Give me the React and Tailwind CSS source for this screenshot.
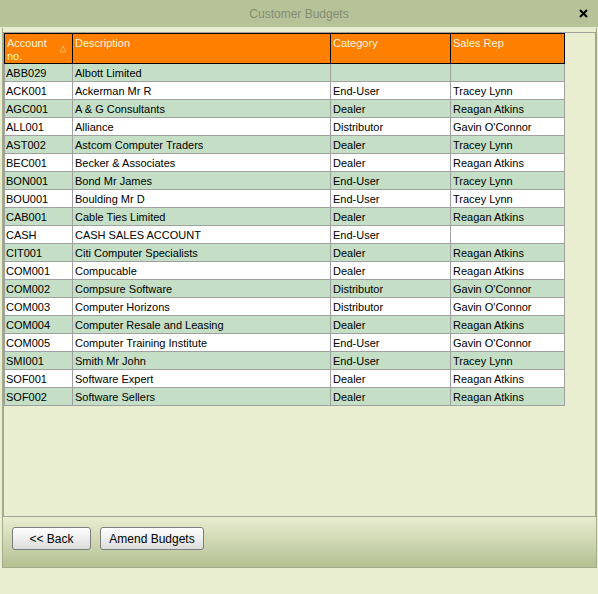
import React from "react";

const rows = [
  ["ABB029", "Albott Limited", "", ""],
  ["ACK001", "Ackerman Mr R", "End-User", "Tracey Lynn"],
  ["AGC001", "A & G Consultants", "Dealer", "Reagan Atkins"],
  ["ALL001", "Alliance", "Distributor", "Gavin O'Connor"],
  ["AST002", "Astcom Computer Traders", "Dealer", "Tracey Lynn"],
  ["BEC001", "Becker & Associates", "Dealer", "Reagan Atkins"],
  ["BON001", "Bond Mr James", "End-User", "Tracey Lynn"],
  ["BOU001", "Boulding Mr D", "End-User", "Tracey Lynn"],
  ["CAB001", "Cable Ties Limited", "Dealer", "Reagan Atkins"],
  ["CASH", "CASH SALES ACCOUNT", "End-User", ""],
  ["CIT001", "Citi Computer Specialists", "Dealer", "Reagan Atkins"],
  ["COM001", "Compucable", "Dealer", "Reagan Atkins"],
  ["COM002", "Compsure Software", "Distributor", "Gavin O'Connor"],
  ["COM003", "Computer Horizons", "Distributor", "Gavin O'Connor"],
  ["COM004", "Computer Resale and Leasing", "Dealer", "Reagan Atkins"],
  ["COM005", "Computer Training Institute", "End-User", "Gavin O'Connor"],
  ["SMI001", "Smith Mr John", "End-User", "Tracey Lynn"],
  ["SOF001", "Software Expert", "Dealer", "Reagan Atkins"],
  ["SOF002", "Software Sellers", "Dealer", "Reagan Atkins"],
];

function App() {
  return (
    <div className="w-[598px] h-[594px] bg-[#e9eed1] text-[11px] text-black font-['Liberation_Sans',Arial,sans-serif] overflow-hidden">
      {/* title bar */}
      <div className="h-[28px] bg-[#b6c298] border-b border-[#e4ead0] flex items-center relative">
        <div className="flex-1 text-center text-[12px] text-[#858d70]">Customer Budgets</div>
        <svg className="absolute right-[10px] top-[9px]" width="9" height="9" viewBox="0 0 9 9">
          <path d="M1 1L8 8M8 1L1 8" stroke="#000" strokeWidth="2" />
        </svg>
      </div>

      {/* main panel */}
      <div className="ml-[2px] w-[595px] border-l border-r border-b border-[#a4ac8b] pt-[4px]">
        {/* grid */}
        <div className="h-[485px] border border-[#a0a39a] bg-[#e9eed1]">
          {/* header */}
          <div className="flex w-[561px] h-[31px] bg-[#ff8000] border-t border-b border-l border-black text-[#fff6dc] leading-[13px]">
            <div className="w-[68px] border-r border-black pl-[2px] pt-[3px] relative">
              Account<br />no.
              <svg className="absolute left-[54px] top-[11px]" width="8" height="8" viewBox="0 0 8 8">
                <path d="M4 1L7 7H1Z" fill="none" stroke="#ffb366" strokeWidth="1" />
              </svg>
            </div>
            <div className="w-[258px] border-r border-black pl-[2px] pt-[3px]">Description</div>
            <div className="w-[120px] border-r border-black pl-[2px] pt-[3px]">Category</div>
            <div className="w-[114px] border-r border-black pl-[2px] pt-[3px]">Sales Rep</div>
          </div>
          {rows.map((r, i) => (
            <div
              key={r[0]}
              className={
                "flex w-[561px] h-[18px] border-l border-b border-[#a0a0a0] pt-[2px] leading-[14px] " +
                (i % 2 === 0 ? "bg-[#c4dfc6]" : "bg-white")
              }
            >
              <div className="w-[68px] -mt-[2px] pt-[2px] border-r border-[#a0a0a0] pl-[1px] whitespace-nowrap">{r[0]}</div>
              <div className="w-[258px] -mt-[2px] pt-[2px] border-r border-[#a0a0a0] pl-[2px] whitespace-nowrap">{r[1]}</div>
              <div className="w-[120px] -mt-[2px] pt-[2px] border-r border-[#a0a0a0] pl-[2px] whitespace-nowrap">{r[2]}</div>
              <div className="w-[114px] -mt-[2px] pt-[2px] border-r border-[#a0a0a0] pl-[2px] whitespace-nowrap">{r[3]}</div>
            </div>
          ))}
        </div>

        {/* button bar */}
        <div className="h-[50px] bg-gradient-to-b from-[#e9edd1] to-[#b3c192] flex items-start gap-[9px] pl-[9px] pt-[10px]">
          <button className="w-[79px] h-[23px] border border-[#7d7d7d] rounded-[3px] bg-gradient-to-b from-[#ffffff] to-[#dcdcdc] text-[12px]">
            &lt;&lt; Back
          </button>
          <button className="w-[104px] h-[23px] border border-[#7d7d7d] rounded-[3px] bg-gradient-to-b from-[#ffffff] to-[#dcdcdc] text-[12px]">
            Amend Budgets
          </button>
        </div>
      </div>
    </div>
  );
}

export default App;
